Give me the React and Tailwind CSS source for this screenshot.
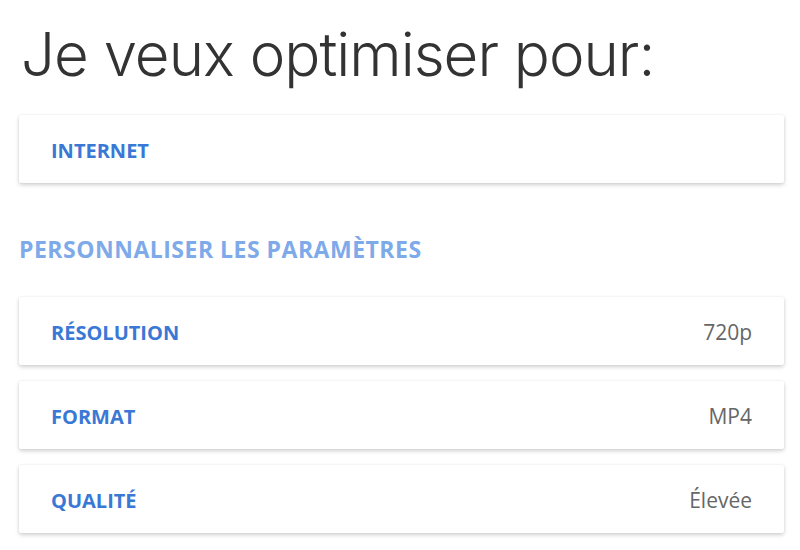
import React from "react";

const rows = [
  { label: "RÉSOLUTION", value: "720p" },
  { label: "FORMAT", value: "MP4" },
  { label: "QUALITÉ", value: "Élevée" },
];

function Card({ label, value }) {
  return (
    <div className="h-[68px] bg-white rounded-[2px] shadow-[0_2px_4px_rgba(0,0,0,0.18),0_0_2px_rgba(0,0,0,0.08)] flex items-center justify-between px-[32px] pt-[3px]">
      <span className="text-[20px] font-bold text-[#3a78d6]">{label}</span>
      {value && <span className="text-[21px] text-[#666666]">{value}</span>}
    </div>
  );
}

export default function App() {
  return (
    <div
      className="w-[800px] h-[550px] bg-white pl-[19px] pr-[16px] overflow-hidden"
      style={{ fontFamily: '"Open Sans", "Noto Sans", sans-serif' }}
    >
      <h1
        className="text-[60px] font-light text-[#333333] leading-none tracking-[-1px] pt-[24px] pb-[31px] pl-[2px]"
        style={{ fontFamily: 'Inter, "Open Sans", sans-serif' }}
      >
        Je veux optimiser pour:
      </h1>
      <Card label="INTERNET" />
      <div className="pt-[55px] pb-[36px] text-[23px] font-bold text-[#7eaaea] leading-none tracking-[0.5px]">
        PERSONNALISER LES PARAMÈTRES
      </div>
      <div className="flex flex-col gap-[16px]">
        {rows.map((r) => (
          <Card key={r.label} label={r.label} value={r.value} />
        ))}
      </div>
    </div>
  );
}
